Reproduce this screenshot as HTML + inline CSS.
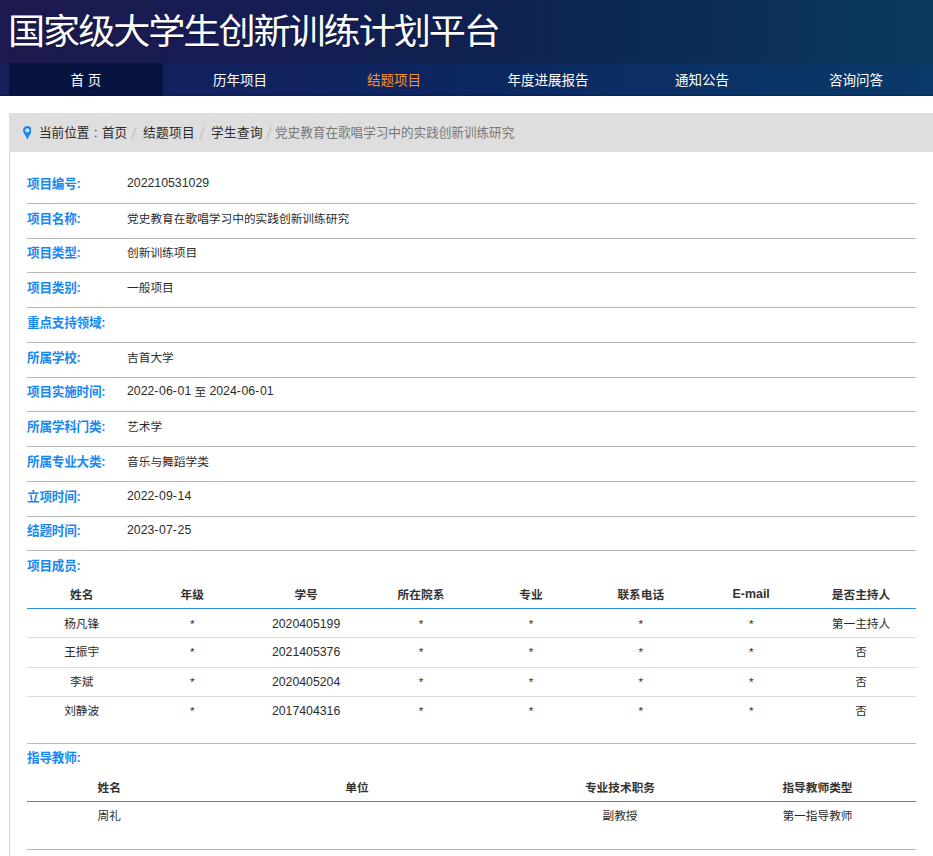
<!DOCTYPE html>
<html lang="zh-CN"><head><meta charset="utf-8"><title>国家级大学生创新训练计划平台</title>
<style>
html,body{margin:0;padding:0;background:#fff;}
body{width:933px;height:856px;overflow:hidden;position:relative;font-family:"Liberation Sans", "Noto Sans CJK SC", sans-serif;color:#2b2b2b;font-size:11.7px;}
a{color:inherit;text-decoration:none;}
.abs{position:absolute;white-space:nowrap;}
#hdr{position:absolute;left:0;top:0;width:933px;height:96px;background:linear-gradient(to right,#1d1a4d 0%,#171c54 24%,#0e2250 54%,#0b2e56 78%,#0a3b5c 100%);}
#title{position:absolute;left:8px;top:12px;font-size:35.1px;transform:scaleX(1.06);transform-origin:0 0;letter-spacing:-2px;line-height:40px;color:#fff;white-space:nowrap;font-weight:400;text-shadow:0 1px 1px rgba(0,0,0,.35);}
#nav{position:absolute;left:0;top:63px;width:933px;height:33px;background:linear-gradient(to right,#181e5e 0%,#0d2560 45%,#093a69 100%);box-shadow:inset 0 -1px 0 rgba(0,0,40,.22);}
#nav a{position:absolute;top:0;width:154px;height:33px;line-height:36px;text-align:center;color:#fff;font-size:13.5px;}
#nav a.on{background:#07143f;box-shadow:inset 0 -1px 0 rgba(0,0,40,.22);}
#nav a.cur{color:#f5952a;}
#bc{position:absolute;left:9px;top:113px;width:924px;height:39px;background:#dedede;font-size:12.6px;line-height:41px;}
#bc .abs{top:0;}
#bc .sep{color:#c6c6c6;font-size:16px;transform:scaleX(1.3);transform-origin:0 50%;}
#bc a.abs{letter-spacing:.4px;}
#main{position:absolute;left:9px;top:152px;width:924px;height:704px;border-left:1px solid #d4d4d4;box-sizing:border-box;}
.row{position:absolute;left:27px;width:889px;height:34px;border-bottom:1px solid #b9b9b9;}
.row .lb,.sec .lb{position:absolute;left:0;top:0;font-size:12.6px;font-weight:700;color:#1787f4;white-space:nowrap;letter-spacing:-0.2px;}
.row .val{position:absolute;left:100px;top:0;white-space:nowrap;}
.row .lb{line-height:30px;}.row .val{line-height:29px;}
.num{font-size:12.3px;position:relative;top:-1px;}
.hy{letter-spacing:.65px;}
.td .num{top:0;}
.sec{position:absolute;left:27px;width:889px;}
.th{position:absolute;font-size:11.7px;font-weight:700;color:#333;white-space:nowrap;transform:translateX(-50%);line-height:20px;}
.td{position:absolute;white-space:nowrap;transform:translateX(-50%);line-height:20px;}
.hl{position:absolute;left:27px;width:889px;height:1px;background:#2b8ce8;}
.rl{position:absolute;left:27px;width:889px;height:1px;background:#ddd;}
.sl{position:absolute;left:27px;width:889px;height:1px;background:#b9b9b9;}
</style></head><body>
<div id="hdr"><div id="title">国家级大学生创新训练计划平台</div>
<div id="nav">
<a class="on" style="left:9px">首 页</a>
<a style="left:163px">历年项目</a>
<a class="cur" style="left:317px">结题项目</a>
<a style="left:471px">年度进展报告</a>
<a style="left:625px">通知公告</a>
<a style="left:779px">咨询问答</a>
</div></div>
<div id="bc">
<svg class="abs" style="left:13.7px;top:12.8px" width="8.7" height="13.3" viewBox="0 0 8.7 13.3"><path d="M4.35 0A4.35 4.35 0 0 1 8.7 4.35C8.7 6.9 5.5 10.4 4.75 13 4.6 13.4 4.1 13.4 3.95 13 3.2 10.4 0 6.9 0 4.35A4.35 4.35 0 0 1 4.35 0z" fill="#1787f4"/><circle cx="4.35" cy="4.4" r="2.1" fill="#dedede"/></svg>
<span class="abs" style="left:30px">当前位置<span style="display:inline-block;width:12.6px;text-align:center">:</span><a>首页</a></span>
<span class="abs sep" style="left:121.7px">/</span>
<a class="abs" style="left:134px">结题项目</a>
<span class="abs sep" style="left:189.8px">/</span>
<a class="abs" style="left:202px">学生查询</a>
<span class="abs sep" style="left:256.8px">/</span>
<span class="abs" style="left:266px;color:#777">党史教育在歌唱学习中的实践创新训练研究</span>
</div>
<div id="main"></div>
<div class="row" style="top:169px"><span class="lb">项目编号:</span><span class="val"><span class="num">202210531029</span></span></div>
<div class="row" style="top:204px"><span class="lb">项目名称:</span><span class="val">党史教育在歌唱学习中的实践创新训练研究</span></div>
<div class="row" style="top:238px"><span class="lb">项目类型:</span><span class="val">创新训练项目</span></div>
<div class="row" style="top:273px"><span class="lb">项目类别:</span><span class="val">一般项目</span></div>
<div class="row" style="top:308px"><span class="lb">重点支持领域:</span><span class="val"></span></div>
<div class="row" style="top:343px"><span class="lb">所属学校:</span><span class="val">吉首大学</span></div>
<div class="row" style="top:377px"><span class="lb">项目实施时间:</span><span class="val"><span class="num">2022<span class="hy">-</span>06<span class="hy">-</span>01</span> 至 <span class="num">2024<span class="hy">-</span>06<span class="hy">-</span>01</span></span></div>
<div class="row" style="top:412px"><span class="lb">所属学科门类:</span><span class="val">艺术学</span></div>
<div class="row" style="top:447px"><span class="lb">所属专业大类:</span><span class="val">音乐与舞蹈学类</span></div>
<div class="row" style="top:482px"><span class="lb">立项时间:</span><span class="val"><span class="num">2022<span class="hy">-</span>09<span class="hy">-</span>14</span></span></div>
<div class="row" style="top:516px"><span class="lb">结题时间:</span><span class="val"><span class="num">2023<span class="hy">-</span>07<span class="hy">-</span>25</span></span></div>
<div class="sec" style="top:556px"><span class="lb" style="line-height:20px">项目成员:</span></div>
<span class="th" style="left:81.7px;top:585px">姓名</span>
<span class="th" style="left:192.3px;top:585px">年级</span>
<span class="th" style="left:306.1px;top:585px">学号</span>
<span class="th" style="left:421px;top:585px">所在院系</span>
<span class="th" style="left:531px;top:585px">专业</span>
<span class="th" style="left:640.8px;top:585px">联系电话</span>
<span class="th" style="left:751.2px;top:585px"><span style="font-size:12.4px;position:relative;top:-1px">E-mail</span></span>
<span class="th" style="left:861px;top:585px">是否主持人</span>
<div class="hl" style="top:608px"></div>
<span class="td" style="left:81.7px;top:613.5px">杨凡锋</span>
<span class="td" style="left:192.3px;top:613.5px">*</span>
<span class="td" style="left:306.1px;top:613.5px"><span class="num">2020405199</span></span>
<span class="td" style="left:421px;top:613.5px">*</span>
<span class="td" style="left:531px;top:613.5px">*</span>
<span class="td" style="left:640.8px;top:613.5px">*</span>
<span class="td" style="left:751.2px;top:613.5px">*</span>
<span class="td" style="left:861px;top:613.5px">第一主持人</span>
<span class="td" style="left:81.7px;top:642.3px">王振宇</span>
<span class="td" style="left:192.3px;top:642.3px">*</span>
<span class="td" style="left:306.1px;top:642.3px"><span class="num">2021405376</span></span>
<span class="td" style="left:421px;top:642.3px">*</span>
<span class="td" style="left:531px;top:642.3px">*</span>
<span class="td" style="left:640.8px;top:642.3px">*</span>
<span class="td" style="left:751.2px;top:642.3px">*</span>
<span class="td" style="left:861px;top:642.3px">否</span>
<span class="td" style="left:81.7px;top:671.6px">李斌</span>
<span class="td" style="left:192.3px;top:671.6px">*</span>
<span class="td" style="left:306.1px;top:671.6px"><span class="num">2020405204</span></span>
<span class="td" style="left:421px;top:671.6px">*</span>
<span class="td" style="left:531px;top:671.6px">*</span>
<span class="td" style="left:640.8px;top:671.6px">*</span>
<span class="td" style="left:751.2px;top:671.6px">*</span>
<span class="td" style="left:861px;top:671.6px">否</span>
<span class="td" style="left:81.7px;top:700.8px">刘静波</span>
<span class="td" style="left:192.3px;top:700.8px">*</span>
<span class="td" style="left:306.1px;top:700.8px"><span class="num">2017404316</span></span>
<span class="td" style="left:421px;top:700.8px">*</span>
<span class="td" style="left:531px;top:700.8px">*</span>
<span class="td" style="left:640.8px;top:700.8px">*</span>
<span class="td" style="left:751.2px;top:700.8px">*</span>
<span class="td" style="left:861px;top:700.8px">否</span>
<div class="rl" style="top:637px"></div>
<div class="rl" style="top:667px"></div>
<div class="rl" style="top:696px"></div>
<div class="sl" style="top:743px"></div>
<div class="sec" style="top:748px"><span class="lb" style="line-height:20px">指导教师:</span></div>
<span class="th" style="left:109.2px;top:778px">姓名</span>
<span class="th" style="left:357px;top:778px">单位</span>
<span class="th" style="left:620px;top:778px">专业技术职务</span>
<span class="th" style="left:817.5px;top:778px">指导教师类型</span>
<div class="hl" style="top:801px"></div>
<span class="td" style="left:109.2px;top:806px">周礼</span>
<span class="td" style="left:620px;top:806px">副教授</span>
<span class="td" style="left:817.5px;top:806px">第一指导教师</span>
<div class="sl" style="top:849px"></div>
</body></html>
